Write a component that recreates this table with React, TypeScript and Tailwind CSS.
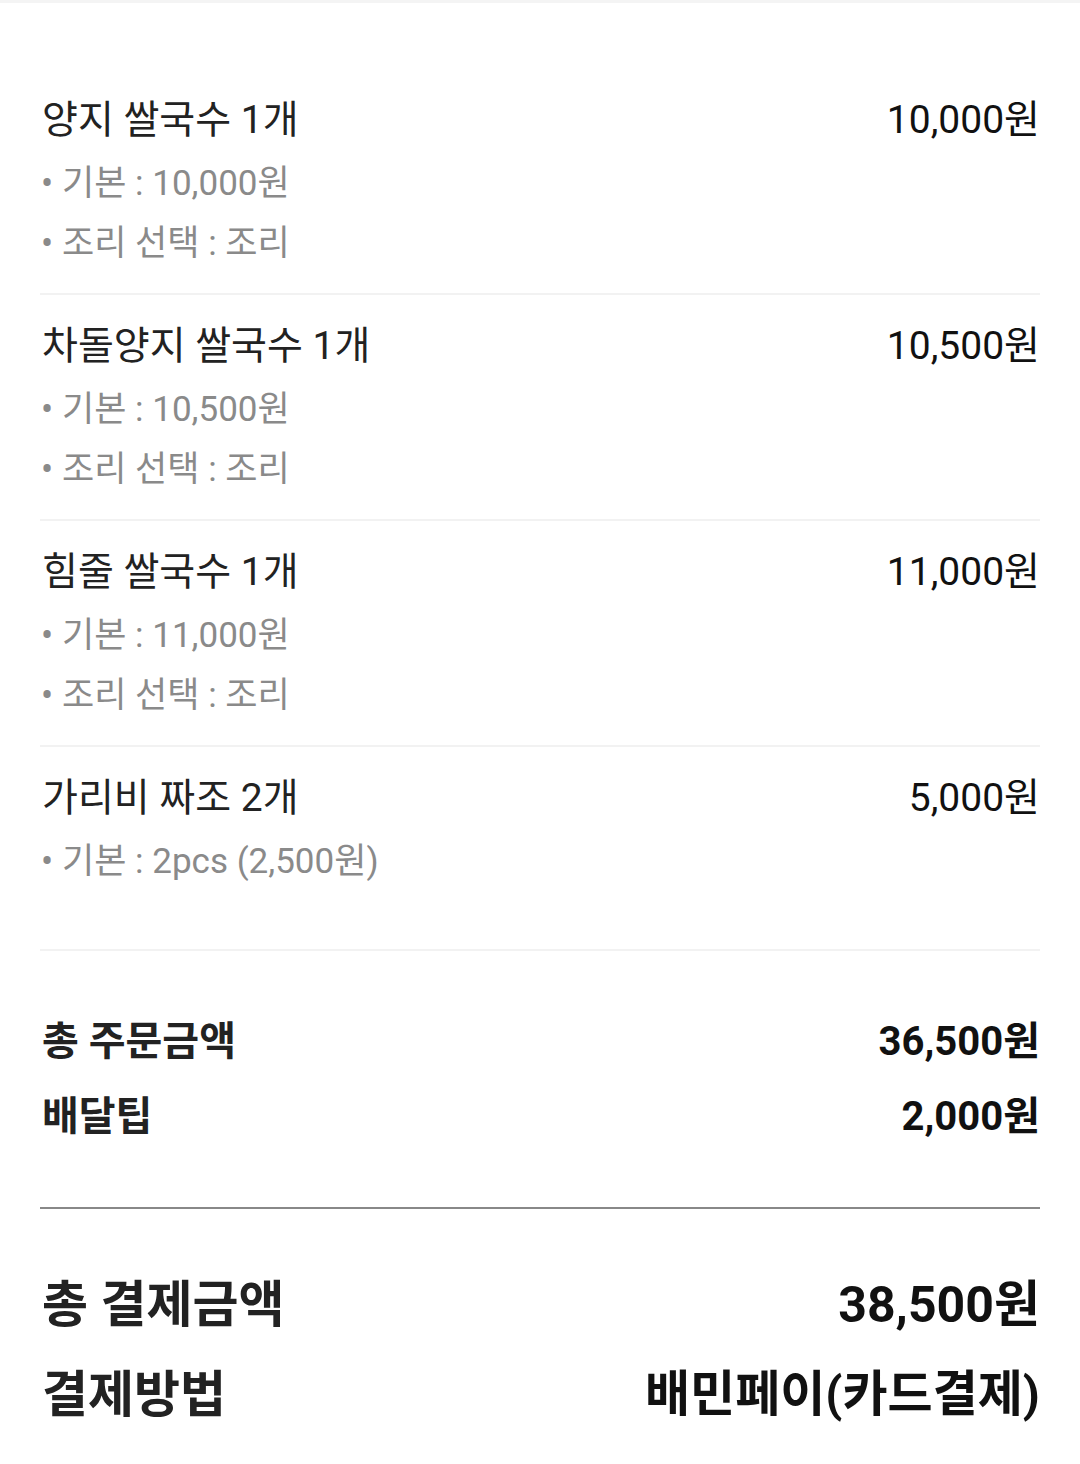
const font = "font-['Roboto','Noto_Sans_CJK_KR',sans-serif]";

type Item = { name: string; price: string; options: string[] };

const items: Item[] = [
  { name: "양지 쌀국수 1개", price: "10,000원", options: ["기본 : 10,000원", "조리 선택 : 조리"] },
  { name: "차돌양지 쌀국수 1개", price: "10,500원", options: ["기본 : 10,500원", "조리 선택 : 조리"] },
  { name: "힘줄 쌀국수 1개", price: "11,000원", options: ["기본 : 11,000원", "조리 선택 : 조리"] },
  { name: "가리비 짜조 2개", price: "5,000원", options: ["기본 : 2pcs (2,500원)"] },
];

function OrderItem({ item, last }: { item: Item; last: boolean }) {
  return (
    <div className={`pt-[25px] ${last ? "" : "pb-[19px] border-b-2 border-[#f2f2f2]"}`}>
      <div className="flex items-center justify-between h-[52px]">
        <span className="text-[39px] text-[#222222] pl-[2px]">{item.name}</span>
        <span className="text-[39px] text-[#111111]">{item.price}</span>
      </div>
      <div className="mt-2">
        {item.options.map((opt) => (
          <div key={opt} className="flex items-center h-[60px] text-[35px] text-[#8a8a8a]">
            <span className="text-[36px] w-[22px] pl-[1px]">•</span>
            <span>{opt}</span>
          </div>
        ))}
      </div>
    </div>
  );
}

export default function App() {
  return (
    <div className={`w-[1080px] h-[1464px] bg-white overflow-hidden ${font}`}>
      <div className="h-[3px] bg-[#f4f4f4]" />

      <div className="px-10">
        {/* Items */}
        <div className="pt-[66px] pb-[57px] border-b-2 border-[#f2f2f2]">
          {items.map((item, i) => (
            <OrderItem key={item.name} item={item} last={i === items.length - 1} />
          ))}
        </div>

        {/* Order summary */}
        <div className="pt-[53px] pb-[53px] border-b-2 border-[#888888]">
          <div className="flex items-center justify-between h-[75px]">
            <span className="text-[40px] font-bold text-[#222222] pl-[2px]">총 주문금액</span>
            <span className="text-[40px] font-bold text-[#111111]">36,500원</span>
          </div>
          <div className="flex items-center justify-between h-[75px]">
            <span className="text-[40px] font-bold text-[#222222] pl-[2px]">배달팁</span>
            <span className="text-[40px] font-bold text-[#111111]">2,000원</span>
          </div>
        </div>

        {/* Payment */}
        <div className="pt-[51px]">
          <div className="flex items-center justify-between h-[90px]">
            <span className="text-[50px] font-bold text-[#222222] pl-[2px]">총 결제금액</span>
            <span className="text-[50px] font-bold text-[#111111]">38,500원</span>
          </div>
          <div className="flex items-center justify-between h-[90px]">
            <span className="text-[50px] font-bold text-[#222222] pl-[2px]">결제방법</span>
            <span className="text-[49px] font-bold text-[#111111]">배민페이(카드결제)</span>
          </div>
        </div>
      </div>
    </div>
  );
}
